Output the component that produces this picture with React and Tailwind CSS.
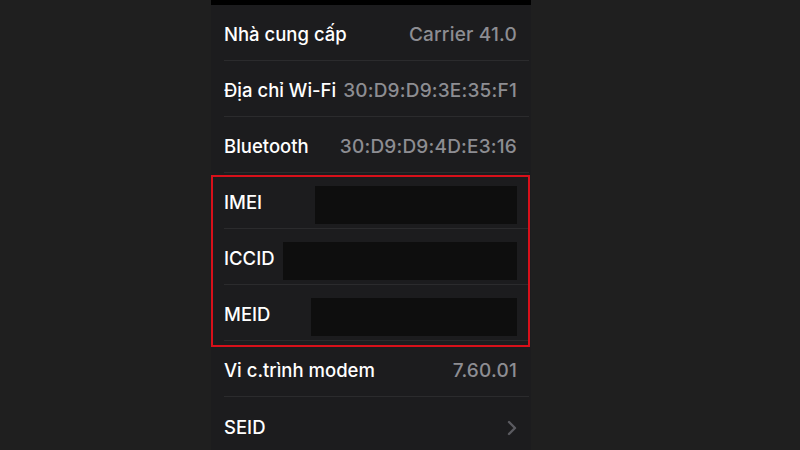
import React from "react";

const rows = [
  { label: "Nhà cung cấp", value: "Carrier 41.0" },
  { label: "Địa chỉ Wi-Fi", value: "30:D9:D9:3E:35:F1" },
  { label: "Bluetooth", value: "30:D9:D9:4D:E3:16" },
  { label: "IMEI", hidden: "w-[202px]" },
  { label: "ICCID", hidden: "w-[234px]" },
  { label: "MEID", hidden: "w-[206px]" },
  { label: "Vi c.trình modem", value: "7.60.01" },
  { label: "SEID", chevron: true },
];

const Row = ({ row, last }) => (
  <div className="h-[56px] pl-[13px] flex flex-col">
    <div className="flex-1 flex items-center justify-between pr-[14px] pt-[5px]">
      <span className="text-white text-[18.5px] font-medium">{row.label}</span>
      {row.value && <span className="text-[#8d8d92] text-[19px] font-medium tracking-[0.2px]">{row.value}</span>}
      {row.hidden && <div className={`${row.hidden} h-[38px] mt-[3px] bg-[#0e0e0e]`} />}
      {row.chevron && (
        <svg width="12" height="16" viewBox="0 0 12 16" className="mr-[-1px]">
          <path d="M3 2l6 6-6 6" fill="none" stroke="#5b5b60" strokeWidth="2.4" strokeLinecap="round" strokeLinejoin="round" />
        </svg>
      )}
    </div>
    {!last && <div className="h-px bg-[#2b2b2d] mr-[2px]" />}
  </div>
);

export default function App() {
  return (
    <div className="w-[800px] h-[450px] overflow-hidden bg-[#1f1f1f] pl-[211px]" style={{ fontFamily: "Inter, 'Noto Sans', sans-serif" }}>
      <div className="relative w-[320px] h-full bg-[#1c1c1e]">
        <div className="h-[5px] bg-black" />
        {rows.map((row, i) => (
          <Row key={row.label} row={row} last={i === rows.length - 1} />
        ))}
        {/* red highlight around the redacted rows */}
        <div className="absolute left-0 top-[175px] w-[319px] h-[172px] border-2 border-[#d8101a]" />
      </div>
    </div>
  );
}
